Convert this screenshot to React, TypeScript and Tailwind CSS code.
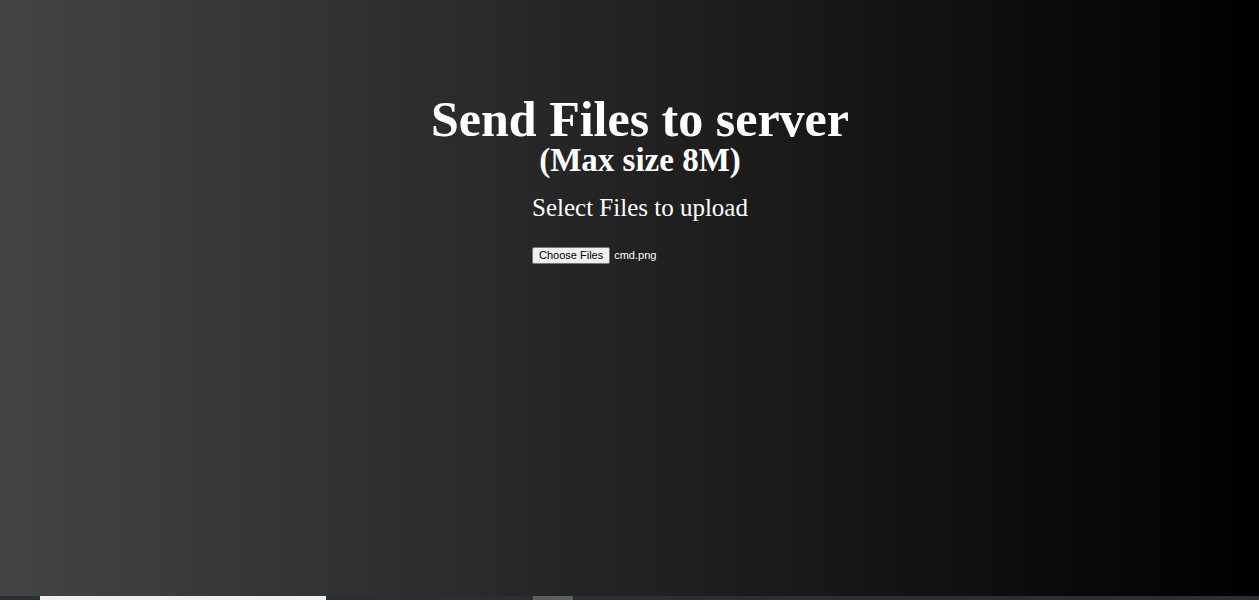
export default function App() {
  return (
    <div className="flex h-[600px] w-full flex-col overflow-hidden">
      <main className="flex flex-1 flex-col items-center bg-[linear-gradient(to_right,#444444,#000000)] pl-[21px] pt-[94px] text-white [font-family:'Liberation_Serif',serif]">
        <h1 className="text-[50px] font-bold leading-[50px]">Send Files to server</h1>
        <h2 className="text-[33px] font-bold leading-[33px]">(Max size 8M)</h2>
        <p className="mt-[16px] text-[25px] leading-[30px]">Select Files to upload</p>

        {/* file picker */}
        <form className="mt-[24px] flex w-[216px] items-center gap-[4px] [font-family:'Liberation_Sans',sans-serif] text-[11px]">
          <button
            type="button"
            className="h-[17px] rounded-[2px] border border-[#767676] bg-[#efefef] px-[6px] leading-[15px] text-black"
          >
            Choose Files
          </button>
          <span className="leading-[15px] text-white">cmd.png</span>
        </form>
      </main>

      {/* taskbar strip */}
      <div className="flex h-[4px] items-stretch bg-[#263035]">
        <div className="ml-[40px] w-[286px] bg-[#f0f0f0]" />
        <div className="ml-[207px] w-[40px] bg-[#5a5f63]" />
      </div>
    </div>
  );
}
